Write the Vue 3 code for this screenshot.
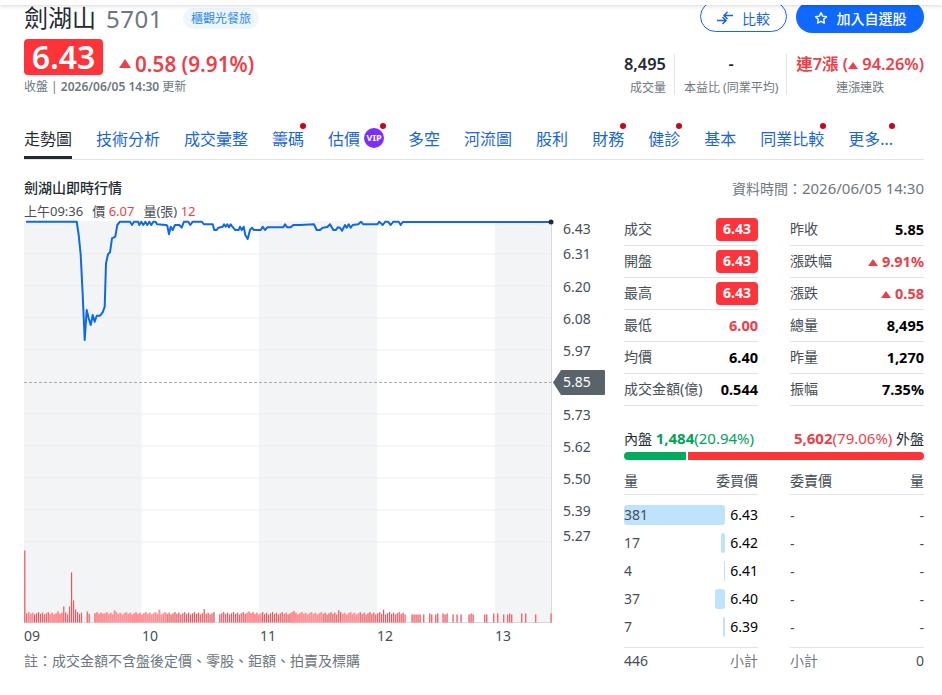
<script setup>
const tabs = [
  { label: '走勢圖', active: true },
  { label: '技術分析' },
  { label: '成交彙整' },
  { label: '籌碼', dot: true },
  { label: '估價', dot: true, vip: true },
  { label: '多空' },
  { label: '河流圖' },
  { label: '股利' },
  { label: '財務', dot: true },
  { label: '健診', dot: true },
  { label: '基本' },
  { label: '同業比較', dot: true },
  { label: '更多...', dot: true }
]

const leftRows = [
  { label: '成交', value: '6.43', box: true },
  { label: '開盤', value: '6.43', box: true },
  { label: '最高', value: '6.43', box: true },
  { label: '最低', value: '6.00', red: true },
  { label: '均價', value: '6.40' },
  { label: '成交金額(億)', value: '0.544' }
]

const rightRows = [
  { label: '昨收', value: '5.85' },
  { label: '漲跌幅', value: '9.91%', red: true, up: true },
  { label: '漲跌', value: '0.58', red: true, up: true },
  { label: '總量', value: '8,495' },
  { label: '昨量', value: '1,270' },
  { label: '振幅', value: '7.35%' }
]

const bids = [
  { qty: 381, price: '6.43' },
  { qty: 17, price: '6.42' },
  { qty: 4, price: '6.41' },
  { qty: 37, price: '6.40' },
  { qty: 7, price: '6.39' }
]

const barWidth = (qty) => Math.max(1, (qty / 381) * 101) + 'px'

// chart geometry (svg origin is the chart's top left corner)
const bands = [
  { x: 0, w: 117.5 },
  { x: 235, w: 118 },
  { x: 471, w: 56 }
]
const gridYs = [33, 65, 97, 129, 193, 225, 257, 289, 321]
const priceLabels = [
  ['6.43', 12],
  ['6.31', 37],
  ['6.20', 70],
  ['6.08', 102],
  ['5.97', 134],
  ['5.73', 198],
  ['5.62', 230],
  ['5.50', 262],
  ['5.39', 294],
  ['5.27', 319]
]
const hours = [
  ['09', 0],
  ['10', 118],
  ['11', 236],
  ['12', 353],
  ['13', 471]
]

// traced from the reference at 3x: first block then second block
const tracedA = [78,140,230,140,236,180,242,240,248,360,254,495,260,405,266,430,272,450,278,420,284,440,290,422,300,422,308,412,314,395,318,265,324,238,330,232,336,190,346,185,352,150,360,140,390,140,396,150,402,140,414,140,418,150,424,140,430,150,436,140,442,150,448,140,454,150,460,140,466,140,472,148,498,150,502,152,507,178,512,155,518,165,525,150,538,150,545,158,552,140,565,140,571,150,578,140,605,140,612,148,638,148,643,165,650,165,655,158,668,155,672,148,677,155,682,148,687,157,692,148,697,155,706,165,716,165,720,155,725,165,731,155,736,180,743,192,750,165,756,158,762,165,782,165,788,155,795,165,802,157,850,157,855,148,862,157,872,157,880,150,900,150]
const tracedB = [0,150,42,148,50,165,60,165,68,158,82,156,90,148,100,165,108,165,113,157,120,158,126,167,135,150,140,158,146,148,152,158,158,150,175,148,183,140,190,148,232,148,238,140,248,150,256,140,264,140,272,150,280,140,296,140,302,150,308,141,750,141]

const toPoints = (arr, offset) => {
  const out = []
  for (let i = 0; i < arr.length; i += 2) {
    out.push(`${(offset + arr[i] / 3 - 24).toFixed(1)},${(175 + arr[i + 1] / 3 - 221).toFixed(1)}`)
  }
  return out
}
const linePoints = [...toPoints(tracedA, 0), ...toPoints(tracedB, 300)].join(' ')

// volume bars
const spikes = { 0: 72, 23: 16, 20: 16, 21: 10, 22: 8, 24: 50, 25: 22, 26: 13, 17: 11, 32: 11, 40: 9 }
const skip = new Set([30, 31, 34, 35, 98, 99, 199])
const stripes = [[0, 1], [5, 12], [20, 36], [73, 113], [122, 136], [153, 162], [172, 194]]
const isStripe = (i) => stripes.some(([a, b]) => i >= a && i <= b)
const sparse = [335,341,347,353,359,370,388,394,406,412,428,434,440,458,470,482,506,512,518,553,559,580,592,610,622,628,634,664,676,706,752]
const volumeBars = []
for (let i = 0; i < 196; i++) {
  if (skip.has(i)) continue
  const h = spikes[i] || 8 + ((i * 7) % 5) * 0.6 + (i % 23 === 0 ? 3 : 0)
  volumeBars.push({ x: i * 1.95 + 0.4, h, thin: isStripe(i) })
}
for (const zx of sparse) {
  volumeBars.push({ x: 300 + zx / 3 - 24, h: zx % 4 === 0 ? 9 : 8, thin: true })
}
</script>

<template>
  <div class="page">
    <div class="topbar"></div>

    <header class="head">
      <div class="title">
        <h1>劍湖山</h1>
        <span class="code">5701</span>
        <span class="pill">櫃觀光餐旅</span>
      </div>
      <div class="actions">
        <button class="btn btn-line">
          <svg width="16" height="14" viewBox="0 0 16 14" fill="none" stroke="currentColor" stroke-width="1.5">
            <path d="M0 9.500h8.500M5.500 6l3.500 3.500-3.500 3.500" />
            <path d="M16 4.500H7.500M10.500 1L7 4.500 10.500 8" />
          </svg>
          比較
        </button>
        <button class="btn btn-solid">
          <svg width="14" height="14" viewBox="0 0 24 24" fill="none" stroke="currentColor" stroke-width="2.4" stroke-linejoin="round">
            <path d="M12 2.8l2.9 6 6.5.9-4.7 4.6 1.1 6.5-5.8-3.1-5.8 3.1 1.1-6.5-4.7-4.6 6.5-.9z" />
          </svg>
          加入自選股
        </button>
      </div>
    </header>

    <section class="quote">
      <div>
        <div class="price-row">
          <span class="price">6.43</span>
          <span class="tri tri-lg"></span>
          <span class="change">0.58 (9.91%)</span>
        </div>
        <div class="updated">收盤 | <b>2026/06/05 14:30</b> 更新</div>
      </div>
      <ul class="stats">
        <li>
          <strong>8,495</strong>
          <span>成交量</span>
        </li>
        <li class="center">
          <strong>-</strong>
          <span>本益比 (同業平均)</span>
        </li>
        <li class="center">
          <strong class="red">連7漲 (<i class="tri tri-sm"></i> 94.26%)</strong>
          <span>連漲連跌</span>
        </li>
      </ul>
    </section>

    <nav class="tabs">
      <a v-for="t in tabs" :key="t.label" class="tab" :class="{ active: t.active }">
        {{ t.label }}
        <span v-if="t.vip" class="vip">VIP</span>
        <span v-if="t.dot" class="dot"></span>
      </a>
    </nav>

    <div class="body">
      <section class="chart-col">
        <div class="chart-head">
          <h2>劍湖山即時行情</h2>
          <span class="data-time">資料時間：<span class="num">2026/06/05 14:30</span></span>
        </div>
        <div class="tick-info">
          上午09:36<span class="gap">價</span> <em>6.07</em><span class="gap">量(張)</span> <em>12</em>
        </div>
        <svg class="chart" width="582" height="422" viewBox="0 0 582 422">
          <rect v-for="b in bands" :key="b.x" :x="b.x" y="0" :width="b.w" height="401.5" fill="#f3f4f5" />
          <line v-for="y in gridYs" :key="y" x1="0" x2="527" :y1="y" :y2="y" stroke="#eceef0" stroke-width="1" />
          <line x1="0" x2="527" y1="161.5" y2="161.5" stroke="#a8adb2" stroke-width="1" stroke-dasharray="3 2" />
          <line x1="527.5" x2="527.5" y1="0" y2="401.5" stroke="#d5d8dc" />
          <line x1="0" x2="527.5" y1="401.5" y2="401.5" stroke="#d5d8dc" />

          <g v-for="(b, i) in volumeBars" :key="i">
            <template v-if="b.thin">
              <rect :x="b.x - 0.5" :y="401.5 - b.h" width="1.95" :height="b.h" fill="#ffc6c8" />
              <rect :x="b.x" :y="401.5 - b.h" width="0.8" :height="b.h" fill="#d8404c" />
            </template>
            <rect v-else :x="b.x - 0.5" :y="401.5 - b.h" width="1.95" :height="b.h" fill="#ff8f94" />
          </g>

          <polyline :points="linePoints" fill="none" stroke="#0f69e6" stroke-width="2" stroke-linejoin="round" />
          <circle cx="527" cy="1" r="2.500" fill="#232a31" />

          <text v-for="p in priceLabels" :key="p[0]" x="539" :y="p[1] + 1" class="axis">{{ p[0] }}</text>

          <path d="M529 161.500l8-12.500h43a1 1 0 0 1 1 1v23a1 1 0 0 1-1 1h-43z" fill="#5b636a" />
          <text x="539" y="165.500" class="axis axis-now">5.85</text>

          <text v-for="h in hours" :key="h[0]" :x="h[1]" y="420" class="axis">{{ h[0] }}</text>
        </svg>
        <p class="note">註：成交金額不含盤後定價、零股、鉅額、拍賣及標購</p>
      </section>

      <aside class="side">
        <div class="tables">
          <div class="table">
            <div v-for="r in leftRows" :key="r.label" class="row">
              <span class="row-label">{{ r.label }}</span>
              <span v-if="r.box" class="box">{{ r.value }}</span>
              <span v-else class="row-value" :class="{ red: r.red }">{{ r.value }}</span>
            </div>
          </div>
          <div class="table">
            <div v-for="r in rightRows" :key="r.label" class="row">
              <span class="row-label">{{ r.label }}</span>
              <span class="row-value" :class="{ red: r.red }">
                <i v-if="r.up" class="tri tri-sm"></i>
                {{ r.value }}
              </span>
            </div>
          </div>
        </div>

        <div class="inout">
          <span>內盤 <b class="green num">1,484</b><span class="green num">(20.94%)</span></span>
          <span><b class="red num">5,602</b><span class="red num">(79.06%)</span> 外盤</span>
        </div>
        <div class="ratio">
          <div class="ratio-in"></div>
          <div class="ratio-out"></div>
        </div>

        <div class="tables book">
          <div class="table">
            <div class="book-head"><span>量</span><span>委買價</span></div>
            <div class="book-rows">
              <div v-for="b in bids" :key="b.price" class="book-row">
                <div class="qty-cell">
                  <span class="qty-bar" :style="{ width: barWidth(b.qty) }"></span>
                  <span class="qty">{{ b.qty }}</span>
                </div>
                <span class="book-price">{{ b.price }}</span>
              </div>
            </div>
            <div class="book-foot"><span>446</span><span class="muted">小計</span></div>
          </div>
          <div class="table">
            <div class="book-head"><span>委賣價</span><span>量</span></div>
            <div class="book-rows">
              <div v-for="b in bids" :key="b.price" class="book-row ask"><span>-</span><span>-</span></div>
            </div>
            <div class="book-foot"><span class="muted">小計</span><span>0</span></div>
          </div>
        </div>
      </aside>
    </div>
  </div>
</template>

<style>
html,
body {
  margin: 0;
  background: #fff;
}
</style>

<style scoped>
.page {
  width: 942px;
  height: 695px;
  overflow: hidden;
  position: relative;
  box-sizing: border-box;
  padding: 0 18px 0 24px;
  font-family: "Noto Sans", "Noto Sans CJK TC", sans-serif;
  color: #232a31;
  font-size: 14px;
}

.topbar {
  position: absolute;
  top: 0;
  left: 0;
  right: 0;
  height: 5px;
  background: #fff;
  box-shadow: 0 1px 4px rgba(0, 0, 0, 0.16);
  z-index: 2;
}

.head {
  display: flex;
  justify-content: space-between;
  align-items: flex-start;
  height: 39px;
}

.title {
  display: flex;
  align-items: center;
  height: 36px;
}

h1 {
  margin: 0;
  font-size: 24px;
  font-weight: 400;
  line-height: 36px;
  color: #232a31;
}

.code {
  font-size: 24px;
  letter-spacing: 0.5px;
  color: #6e7780;
  margin-left: 10px;
}

.pill {
  margin-left: 20px;
  padding: 0 8px;
  height: 21px;
  line-height: 21px;
  border-radius: 11px;
  background: #edf5fd;
  color: #2c8ae8;
  font-size: 12px;
}

.actions {
  display: flex;
  gap: 9px;
  margin-top: 1px;
}

.btn {
  box-sizing: border-box;
  height: 32px;
  border-radius: 16px;
  font-family: inherit;
  font-size: 14px;
  display: flex;
  align-items: center;
  justify-content: center;
  padding: 2px 0 0;
}

.btn-line {
  width: 87px;
  gap: 9px;
  background: #fff;
  border: 1.5px solid #0f69ff;
  color: #1a66d8;
  height: 31px;
}

.btn-solid {
  width: 128px;
  gap: 9px;
  background: #0f69ff;
  border: 0;
  color: #fff;
  font-weight: 500;
}

.quote {
  display: flex;
  justify-content: space-between;
  align-items: flex-start;
  height: 77px;
}

.price-row {
  display: flex;
  align-items: center;
  height: 36px;
}

.price {
  width: 79px;
  height: 36px;
  line-height: 36px;
  text-align: center;
  border-radius: 4px;
  background: #ff333a;
  color: #fff;
  font-size: 32px;
  font-weight: 600;
}

.tri {
  display: inline-block;
  width: 0;
  height: 0;
  border-style: solid;
  border-color: transparent transparent #eb3f49;
}

.tri-lg {
  border-width: 0 6px 9px;
  margin: 13px 4px 0 16px;
}

.tri-sm {
  border-width: 0 5px 7px;
  vertical-align: 1px;
}

.change {
  font-size: 20.7px;
  font-weight: 600;
  color: #eb3f49;
  margin-top: 13px;
}

.updated {
  margin-top: 2px;
  font-size: 12px;
  line-height: 20px;
  color: #6e7780;
}

.updated b {
  font-weight: 600;
}

.stats {
  list-style: none;
  margin: 15px 0 0;
  padding: 0;
  display: flex;
}

.stats li {
  display: flex;
  flex-direction: column;
  align-items: flex-end;
  padding: 0 8px 0 9px;
  height: 41px;
  border-left: 1px solid #e0e4e9;
}

.stats li:first-child {
  border-left: 0;
}

.stats li.center {
  align-items: center;
}

.stats li:last-child {
  padding-right: 0;
}

.stats strong {
  font-size: 16.4px;
  font-weight: 600;
  line-height: 20px;
}

.stats span {
  font-size: 12px;
  line-height: 20px;
  margin-top: 4px;
  color: #6e7780;
}

.red {
  color: #eb3f49;
}

.green {
  color: #00a25a;
}

.num {
  font-size: 15px;
}

.tabs {
  display: flex;
  gap: 24px;
  height: 43px;
  align-items: flex-start;
  border-bottom: 1px solid #e0e4e9;
}

.tab {
  position: relative;
  display: flex;
  align-items: center;
  height: 37px;
  padding-top: 3px;
  font-size: 16px;
  color: #1a66d8;
  white-space: nowrap;
}

.tab.active {
  color: #232a31;
  border-bottom: 3px solid #232a31;
}

.vip {
  width: 20px;
  height: 20px;
  line-height: 20px;
  margin-left: 4px;
  border-radius: 50%;
  background: #7d2eff;
  color: #fff;
  font-size: 9px;
  font-weight: 700;
  text-align: center;
}

.dot {
  position: absolute;
  top: 7px;
  right: -2px;
  width: 6px;
  height: 6px;
  border-radius: 50%;
  background: #d0021b;
}

.body {
  display: flex;
  gap: 18px;
  padding-top: 18px;
}

.chart-col {
  width: 582px;
  flex: none;
}

.chart-head {
  display: flex;
  justify-content: space-between;
  width: 900px;
  line-height: 20px;
}

h2 {
  margin: 0;
  font-size: 14px;
  font-weight: 500;
  line-height: 20px;
}

.data-time {
  color: #6e7780;
}

.tick-info {
  margin-top: 2px;
  font-size: 13px;
  line-height: 20px;
  color: #464e56;
}

.tick-info em {
  font-style: normal;
  color: #eb3f49;
}

.gap {
  margin-left: 9px;
}

.chart {
  display: block;
  overflow: visible;
}

.axis {
  font-size: 14px;
  fill: #464e56;
}

.axis-now {
  fill: #fff;
}

.note {
  margin: 8px 0 0;
  font-size: 14px;
  line-height: 20px;
  color: #6e7780;
}

.side {
  width: 300px;
  flex: none;
  padding-top: 36px;
}

.tables {
  display: flex;
  justify-content: space-between;
}

.table {
  width: 134px;
}

.row {
  display: flex;
  justify-content: space-between;
  align-items: center;
  height: 31px;
  border-bottom: 1px solid #e0e4e9;
}

.row-label {
  color: #464e56;
  margin-bottom: 3px;
}

.row-value {
  font-size: 14.5px;
  font-weight: 700;
  color: #000;
  margin-bottom: 2px;
}

.row-value.red {
  color: #eb3f49;
}

.box {
  width: 42px;
  height: 23px;
  line-height: 22px;
  text-align: center;
  border-radius: 4px;
  background: #ff333a;
  color: #fff;
  font-weight: 700;
}

.inout {
  display: flex;
  justify-content: space-between;
  margin-top: 22px;
  line-height: 20px;
}

.inout b {
  font-weight: 700;
}

.ratio {
  display: flex;
  gap: 2px;
  height: 8px;
  margin-top: 3px;
  border-radius: 4px;
  overflow: hidden;
}

.ratio-in {
  width: 62px;
  background: #00ab5e;
}

.ratio-out {
  flex: 1;
  background: #ff333a;
}

.book {
  margin-top: 10px;
}

.book-head {
  display: flex;
  justify-content: space-between;
  height: 24px;
  line-height: 22px;
  border-bottom: 1px solid #e0e4e9;
  color: #464e56;
}

.book-rows {
  padding: 10px 0 10px;
  border-bottom: 1px solid #e0e4e9;
}

.book-row {
  display: flex;
  justify-content: space-between;
  align-items: center;
  height: 20px;
  margin-bottom: 8px;
  color: #000;
}

.book-row:last-child {
  margin-bottom: 0;
}

.book-price {
  margin-top: -2px;
}

.ask {
  color: #464e56;
}

.qty-cell {
  position: relative;
  width: 101px;
  height: 20px;
  line-height: 20px;
}

.qty-bar {
  position: absolute;
  top: 0;
  right: 0;
  height: 20px;
  border-radius: 3px;
  background: #c0e3fd;
}

.qty {
  position: relative;
  color: #464e56;
}

.book-foot {
  display: flex;
  justify-content: space-between;
  line-height: 26px;
  color: #464e56;
}

.muted {
  color: #6e7780;
}
</style>
